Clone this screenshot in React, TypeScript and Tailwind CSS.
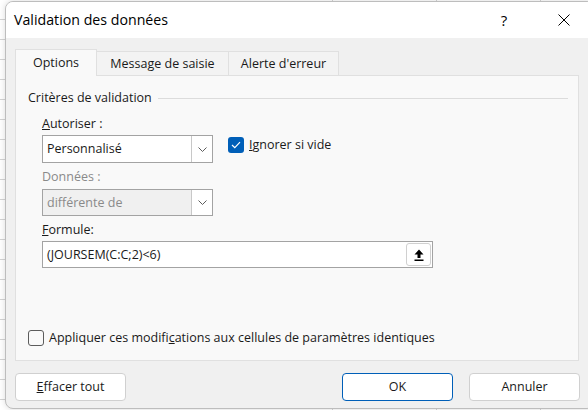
import { ReactNode } from 'react';

const font = { fontFamily: '"Open Sans", "Noto Sans", Arial, sans-serif' };

function Chevron() {
  return (
    <svg width="9" height="5" viewBox="0 0 9 5" fill="none">
      <path d="M0.5 0.5 L4.5 4.5 L8.5 0.5" stroke="#5c5c5c" strokeWidth="1" />
    </svg>
  );
}

function Select({ value, disabled }: { value: string; disabled?: boolean }) {
  return (
    <div
      className={`flex w-[171px] items-stretch border border-[#a3a3a3] ${
        disabled ? 'h-[27px] bg-[#f0f0f0] text-[#8a8a8a]' : 'h-[28px] bg-white text-[#1a1a1a]'
      }`}
    >
      <div className="flex flex-1 items-center pl-[4px]">{value}</div>
      <div className="flex w-[21px] items-center justify-center border-l border-[#c8c8c8] bg-white">
        <Chevron />
      </div>
    </div>
  );
}

function Checkbox({ checked }: { checked?: boolean }) {
  if (checked) {
    return (
      <div className="flex h-[16px] w-[16px] items-center justify-center rounded-[3px] bg-[#005fb8]">
        <svg width="10" height="8" viewBox="0 0 10 8" fill="none">
          <path d="M1 4 L3.8 6.6 L9 1.2" stroke="white" strokeWidth="1.2" />
        </svg>
      </div>
    );
  }
  return <div className="h-[16px] w-[16px] rounded-[3px] border border-[#5c5c5c] bg-[#f9f9f9]" />;
}

function Button({ children, primary, className = '' }: { children: ReactNode; primary?: boolean; className?: string }) {
  return (
    <button
      type="button"
      className={`flex h-[28px] w-[111px] items-center justify-center rounded-[4px] border bg-white text-[#1a1a1a] ${
        primary ? 'border-[#005fb8]' : 'border-[#d0d0d0]'
      } ${className}`}
    >
      {children}
    </button>
  );
}

function Tab({ label, active, className = '' }: { label: string; active?: boolean; className?: string }) {
  if (active) {
    return (
      <div
        className={`relative z-10 -mb-px flex h-[27px] items-center justify-center border border-b-0 border-[#e0e0e0] bg-[#f9f9f9] ${className}`}
      >
        {label}
      </div>
    );
  }
  return (
    <div
      className={`mt-[2px] flex h-[24px] items-center justify-center border border-b-0 border-l-0 border-[#e0e0e0] bg-[#f3f3f3] ${className}`}
    >
      {label}
    </div>
  );
}

export default function App() {
  return (
    <div
      className="h-[410px] w-[588px] overflow-hidden bg-white bg-[linear-gradient(90deg,transparent_332px,#d4d4d4_332px,#d4d4d4_333px,transparent_333px,transparent_436px,#d4d4d4_436px,#d4d4d4_437px,transparent_437px,transparent_540px,#d4d4d4_540px,#d4d4d4_541px,transparent_541px),repeating-linear-gradient(180deg,transparent_0px,transparent_19px,#d4d4d4_19px,#d4d4d4_20px)] pl-[5px] pt-[1px] text-[12.5px] leading-[16px] text-[#1a1a1a]"
      style={font}
    >
      <div className="flex h-[408px] w-[590px] flex-col overflow-hidden rounded-[8px] border border-[#bdbdbd] bg-[#f0f0f0] shadow-[0_0_6px_rgba(0,0,0,0.15)]">
        {/* title bar */}
        <div className="flex h-[36px] shrink-0 items-center bg-white pl-[8px]">
          <div className="flex-1 text-[14.2px] text-black">Validation des données</div>
          <div className="w-[60px] text-center text-[15px] text-black">?</div>
          <div className="flex w-[60px] items-center justify-center">
            <svg width="12" height="12" viewBox="0 0 12 12">
              <path d="M0.5 0.5 L11.5 11.5 M11.5 0.5 L0.5 11.5" stroke="#000" strokeWidth="1" />
            </svg>
          </div>
        </div>

        <div className="flex flex-1 flex-col px-[9px] pt-[11px]">
          {/* tabs */}
          <div className="flex h-[26px] items-end">
            <Tab label="Options" active className="w-[82px]" />
            <Tab label="Message de saisie" className="w-[132px]" />
            <Tab label="Alerte d'erreur" className="w-[110px]" />
          </div>

          {/* options panel */}
          <div className="flex h-[286px] w-[564px] flex-col border border-[#e0e0e0] bg-[#f9f9f9] pl-[12px] pr-[10px]">
            <div className="mt-[14px] flex items-center gap-[6px]">
              <span>Critères de validation</span>
              <div className="h-px flex-1 bg-[#dcdcdc]" />
            </div>

            <div className="ml-[14px] mt-[10px]">
              <div>
                <u>A</u>utoriser :
              </div>
              <div className="mt-[3px] flex items-start gap-[15px]">
                <Select value="Personnalisé" />
                <div className="mt-[2px] flex items-center gap-[5px]">
                  <Checkbox checked />
                  <span>
                    <u>I</u>gnorer si vide
                  </span>
                </div>
              </div>

              <div className="mt-[6px] text-[#8a8a8a]">Données :</div>
              <div className="mt-[4px]">
                <Select value="différente de" disabled />
              </div>

              <div className="mt-[6px]">
                <u>F</u>ormule:
              </div>
              <div className="mt-[3px] flex h-[27px] w-[391px] items-center border border-[#a3a3a3] bg-white pl-[4px] pr-px">
                <span className="flex-1">(JOURSEM(C:C;2)&lt;6)</span>
                <div className="flex h-[23px] w-[25px] items-center justify-center rounded-[3px] border border-[#d0d0d0] bg-white">
                  <svg width="10" height="12" viewBox="0 0 10 12">
                    <path d="M5 0.5 L9.5 5.5 L6.5 5.5 L6.5 9 L3.5 9 L3.5 5.5 L0.5 5.5 Z" fill="#000" />
                    <rect x="0.5" y="10.5" width="9" height="1.5" fill="#000" />
                  </svg>
                </div>
              </div>
            </div>

            <div className="mt-auto mb-[14px] flex items-center gap-[5px]">
              <Checkbox />
              <span>
                Appliquer ces modifi<u>c</u>ations aux cellules de paramètres identiques
              </span>
            </div>
          </div>

          {/* buttons */}
          <div className="mt-[12px] flex pr-[5px]">
            <Button>
              <span>
                <u>E</u>ffacer tout
              </span>
            </Button>
            <div className="flex-1" />
            <Button primary>OK</Button>
            <Button className="ml-[16px]">Annuler</Button>
          </div>
        </div>
      </div>
    </div>
  );
}
